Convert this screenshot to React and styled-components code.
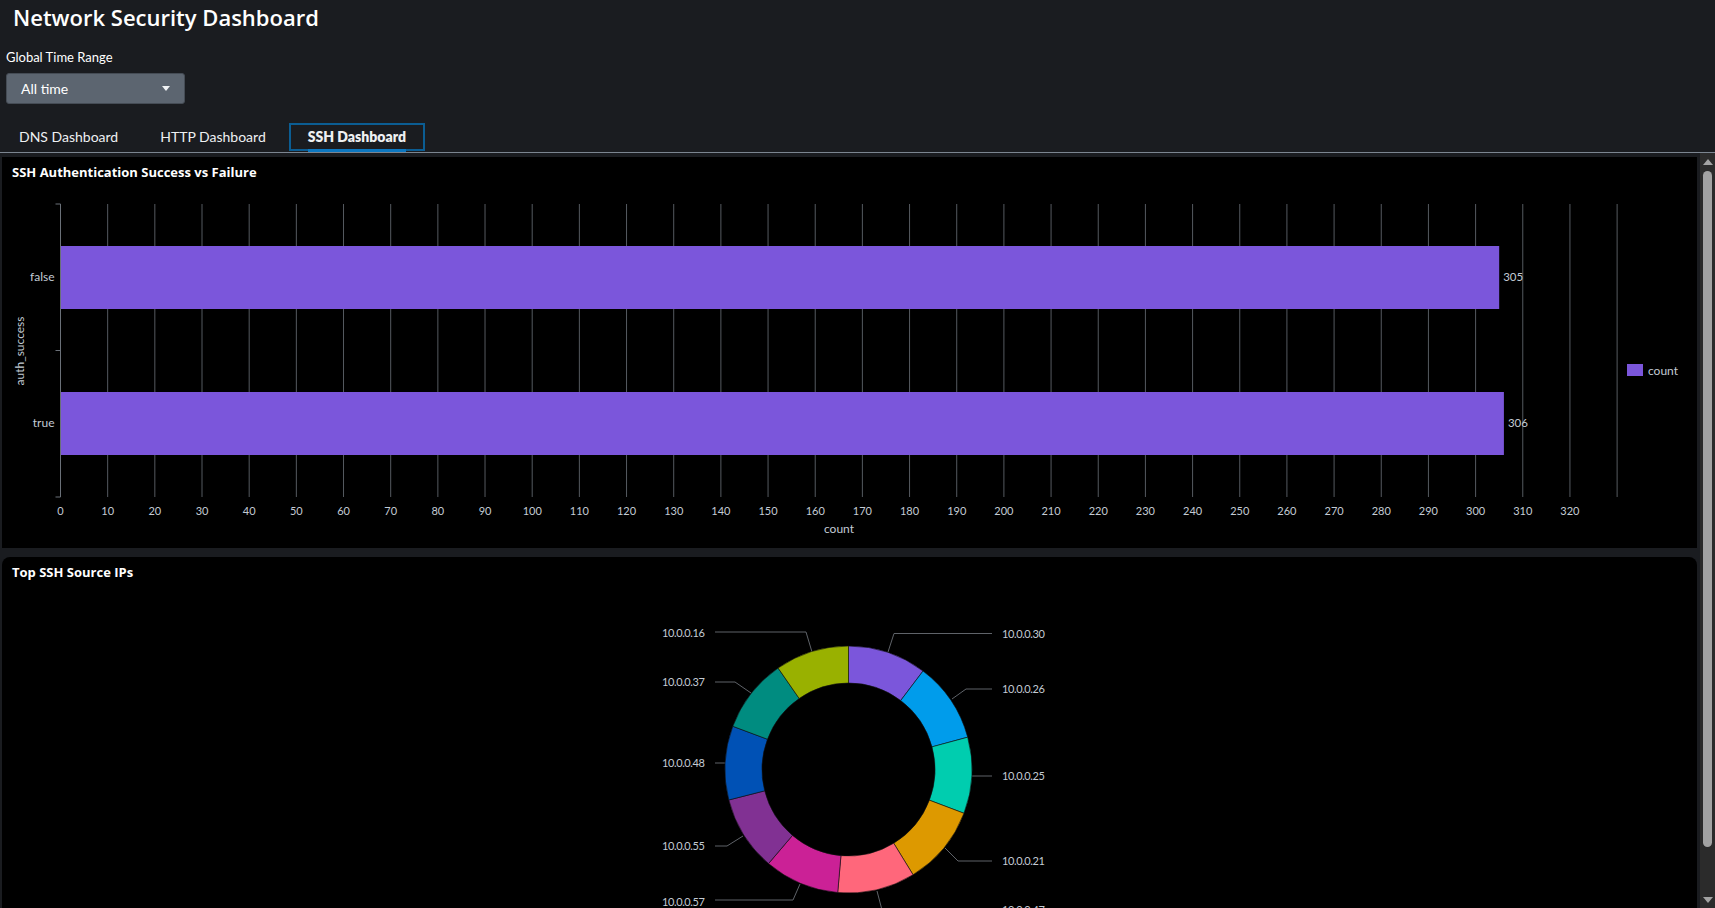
import React from 'react';
import styled, { createGlobalStyle } from 'styled-components';

const GlobalStyle = createGlobalStyle`
  html, body { margin: 0; padding: 0; height: 100%; background: #1a1c20; overflow: hidden; }
  body { font-family: Lato, "Open Sans", "DejaVu Sans", sans-serif; color: #fff; }
  #root { height: 100%; }
`;

const Page = styled.div`
  height: 100vh;
  display: flex;
  flex-direction: column;
  background: #1a1c20;
`;

const Header = styled.header`
  flex: none;
  padding-top: 3px;
`;

const Title = styled.h1`
  margin: 0;
  padding-left: 13px;
  font-family: "Open Sans", Lato, sans-serif;
  font-size: 22px;
  line-height: 28px;
  font-weight: 600;
  color: #fff;
`;

const FieldLabel = styled.div`
  margin-top: 18px;
  padding-left: 6px;
  font-size: 13px;
  line-height: 16px;
  color: #fff;
`;

const Select = styled.div`
  margin: 8px 0 0 6px;
  width: 179px;
  height: 31px;
  box-sizing: border-box;
  display: flex;
  align-items: center;
  justify-content: space-between;
  padding: 0 14px;
  background: #5c6570;
  border: 1px solid #454c55;
  border-radius: 3px;
  font-size: 14px;
  color: #fff;
`;

const Caret = styled.span`
  width: 0;
  height: 0;
  border-left: 4px solid transparent;
  border-right: 4px solid transparent;
  border-top: 5px solid #f0f2f4;
`;

const TabBar = styled.nav`
  margin-top: 19px;
  height: 29px;
  display: flex;
  gap: 4px;
  border-bottom: 1px solid #7c8590;
`;

const Tab = styled.div`
  position: relative;
  box-sizing: border-box;
  height: 28px;
  padding: 0 17px 1px;
  display: flex;
  align-items: center;
  font-size: 14px;
  color: #eef0f2;
  font-weight: ${(p) => (p.$active ? 800 : 400)};
  border: 2px solid ${(p) => (p.$active ? '#0b5d93' : 'transparent')};
  &::after {
    content: '';
    display: ${(p) => (p.$active ? 'block' : 'none')};
    position: absolute;
    left: 17px;
    right: 17px;
    bottom: -3px;
    height: 3px;
    background: #0c77c0;
  }
`;

const Body = styled.div`
  flex: 1;
  min-height: 0;
  display: flex;
`;

const Scroll = styled.main`
  flex: 1;
  min-width: 0;
  overflow-y: auto;
  scrollbar-width: none;
  box-sizing: border-box;
  padding: 4px 3px 3px 2px;
  display: flex;
  flex-direction: column;
  gap: 9px;
`;

const Rail = styled.div`
  flex: none;
  width: 15px;
  display: flex;
  flex-direction: column;
  background: #2b2b2b;
`;

const RailButton = styled.div`
  flex: none;
  height: 17px;
  display: flex;
  align-items: center;
  justify-content: center;
  &::before {
    content: '';
    width: 0;
    height: 0;
    border-left: 5px solid transparent;
    border-right: 5px solid transparent;
    ${(p) => (p.$down ? 'border-top: 6px solid #a3a3a3;' : 'border-bottom: 6px solid #a3a3a3;')}
  }
`;

const RailTrack = styled.div`
  flex: 1;
  padding: 1px 3px 0;
`;

const Thumb = styled.div`
  height: 676px;
  border-radius: 5px;
  background: #a3a3a3;
`;

const Panel = styled.section`
  flex: none;
  height: ${(p) => p.$h}px;
  background: #000;
  border-radius: ${(p) => (p.$rounded ? '8px 8px 0 0' : '0')};
  display: flex;
  flex-direction: column;
  overflow: hidden;
`;

const PanelTitle = styled.h2`
  margin: 0;
  padding: 5px 10px 0 10px;
  font-family: "Open Sans", Lato, sans-serif;
  font-size: 13px;
  line-height: 20px;
  font-weight: 700;
  color: #fff;
`;

const ChartSvg = styled.svg`
  display: block;
  flex: none;
  font-family: Lato, "Open Sans", sans-serif;
`;

const AXIS = '#c3cbd4';
const GRID = '#555a60';
const BAR = '#7b56db';

const X0 = 58.5;
const UNIT = 4.717;
const GRID_TOP = 22;
const GRID_BOTTOM = 315;

const bars = [
  { label: 'false', value: 305, y: 64 },
  { label: 'true', value: 306, y: 210 },
];

function BarChart() {
  const gridVals = Array.from({ length: 34 }, (_, i) => i * 10);
  return (
    <ChartSvg width="1695" height="366">
      {gridVals.slice(1).map((v) => (
        <line key={v} x1={X0 + v * UNIT} x2={X0 + v * UNIT} y1={GRID_TOP} y2={GRID_BOTTOM} stroke={GRID} strokeWidth="1" />
      ))}
      <line x1={X0} x2={X0} y1={GRID_TOP} y2={GRID_BOTTOM} stroke="#6a7078" strokeWidth="1" />
      {[GRID_TOP, 168.5, GRID_BOTTOM].map((y) => (
        <line key={y} x1={X0 - 5} x2={X0} y1={y} y2={y} stroke="#6a7078" strokeWidth="1" />
      ))}
      {bars.map((b) => (
        <g key={b.label}>
          <rect x={X0 + 0.5} y={b.y} width={b.value * UNIT - 0.5} height="63" fill={BAR} />
          <text x={X0 + b.value * UNIT + 4} y={b.y + 32} fontSize="11.5" fill={AXIS} dominantBaseline="middle">{b.value}</text>
          <text x={X0 - 6} y={b.y + 32} fontSize="12" fill={AXIS} textAnchor="end" dominantBaseline="middle">{b.label}</text>
        </g>
      ))}
      {gridVals.slice(0, 33).map((v) => (
        <text key={v} x={X0 + v * UNIT} y={330} fontSize="11" fill={AXIS} textAnchor="middle" dominantBaseline="middle">{v}</text>
      ))}
      <text x={837} y={348} fontSize="12" fill={AXIS} textAnchor="middle" dominantBaseline="middle">count</text>
      <text x={0} y={0} fontSize="12" fill={AXIS} textAnchor="middle" dominantBaseline="middle" transform="translate(19 169) rotate(-90)">auth_success</text>
      <rect x={1625} y={182} width="16" height="12" fill={BAR} />
      <text x={1646} y={189.5} fontSize="12" fill={AXIS} dominantBaseline="middle">count</text>
    </ChartSvg>
  );
}

const slices = [
  { ip: '10.0.0.30', count: 63, color: '#7b56db' },
  { ip: '10.0.0.26', count: 64, color: '#009ceb' },
  { ip: '10.0.0.25', count: 61, color: '#00cdaf' },
  { ip: '10.0.0.21', count: 64, color: '#dd9900' },
  { ip: '10.0.0.47', count: 62, color: '#ff677b' },
  { ip: '10.0.0.57', count: 60, color: '#cb2196' },
  { ip: '10.0.0.55', count: 60, color: '#813193' },
  { ip: '10.0.0.48', count: 59, color: '#0051b5' },
  { ip: '10.0.0.37', count: 59, color: '#008c80' },
  { ip: '10.0.0.16', count: 59, color: '#99b100' },
];

const labels = [
  { ip: '10.0.0.30', x: 1000, y: 53, pts: '990,51.5 892,51.5 886,70' },
  { ip: '10.0.0.26', x: 1000, y: 108, pts: '990,107 964,107 950,117' },
  { ip: '10.0.0.25', x: 1000, y: 195, pts: '970,194 990,194' },
  { ip: '10.0.0.21', x: 1000, y: 280, pts: '943,266 956,279 990,279' },
  { ip: '10.0.0.47', x: 1000, y: 329, pts: '875,309 880,328 990,328' },
  { ip: '10.0.0.16', x: 660, y: 52, pts: '713,50 804,50 810,70' },
  { ip: '10.0.0.37', x: 660, y: 101, pts: '713,100 733,100 749,111' },
  { ip: '10.0.0.48', x: 660, y: 182, pts: '713,181 724,181' },
  { ip: '10.0.0.55', x: 660, y: 265, pts: '713,264 725,264 741,254' },
  { ip: '10.0.0.57', x: 660, y: 321, pts: '713,318 791,318 798,302' },
];

const CX = 846.5;
const CY = 187.5;
const R_OUT = 123.5;
const R_IN = 86.5;

function pt(r, deg) {
  const a = (deg * Math.PI) / 180;
  return [CX + r * Math.sin(a), CY - r * Math.cos(a)];
}

function arc(a0, a1) {
  const large = a1 - a0 > 180 ? 1 : 0;
  const [x0, y0] = pt(R_OUT, a0);
  const [x1, y1] = pt(R_OUT, a1);
  const [x2, y2] = pt(R_IN, a1);
  const [x3, y3] = pt(R_IN, a0);
  return `M${x0} ${y0} A${R_OUT} ${R_OUT} 0 ${large} 1 ${x1} ${y1} L${x2} ${y2} A${R_IN} ${R_IN} 0 ${large} 0 ${x3} ${y3} Z`;
}

function DonutChart() {
  const total = slices.reduce((s, d) => s + d.count, 0);
  let acc = 0;
  const paths = slices.map((d) => {
    const a0 = (acc / total) * 360;
    acc += d.count;
    const a1 = (acc / total) * 360;
    return <path key={d.ip} d={arc(a0, a1)} fill={d.color} stroke="#111" strokeWidth="0.6" />;
  });
  return (
    <ChartSvg width="1695" height="375">
      {labels.map((l) => (
        <polyline key={l.ip} points={l.pts} fill="none" stroke="#5f6369" strokeWidth="1" />
      ))}
      {paths}
      {labels.map((l) => (
        <text key={l.ip} x={l.x} y={l.y} fontSize="11" letterSpacing="-0.4" fill={AXIS} dominantBaseline="middle">{l.ip}</text>
      ))}
    </ChartSvg>
  );
}

export default function App() {
  return (
    <>
      <GlobalStyle />
      <Page>
        <Header>
          <Title>Network Security Dashboard</Title>
          <FieldLabel>Global Time Range</FieldLabel>
          <Select>
            <span>All time</span>
            <Caret />
          </Select>
          <TabBar>
            <Tab>DNS Dashboard</Tab>
            <Tab>HTTP Dashboard</Tab>
            <Tab $active>SSH Dashboard</Tab>
          </TabBar>
        </Header>
        <Body>
          <Scroll>
            <Panel $h={391}>
              <PanelTitle>SSH Authentication Success vs Failure</PanelTitle>
              <BarChart />
            </Panel>
            <Panel $h={400} $rounded>
              <PanelTitle>Top SSH Source IPs</PanelTitle>
              <DonutChart />
            </Panel>
          </Scroll>
          <Rail aria-hidden="true">
            <RailButton />
            <RailTrack>
              <Thumb />
            </RailTrack>
            <RailButton $down />
          </Rail>
        </Body>
      </Page>
    </>
  );
}
